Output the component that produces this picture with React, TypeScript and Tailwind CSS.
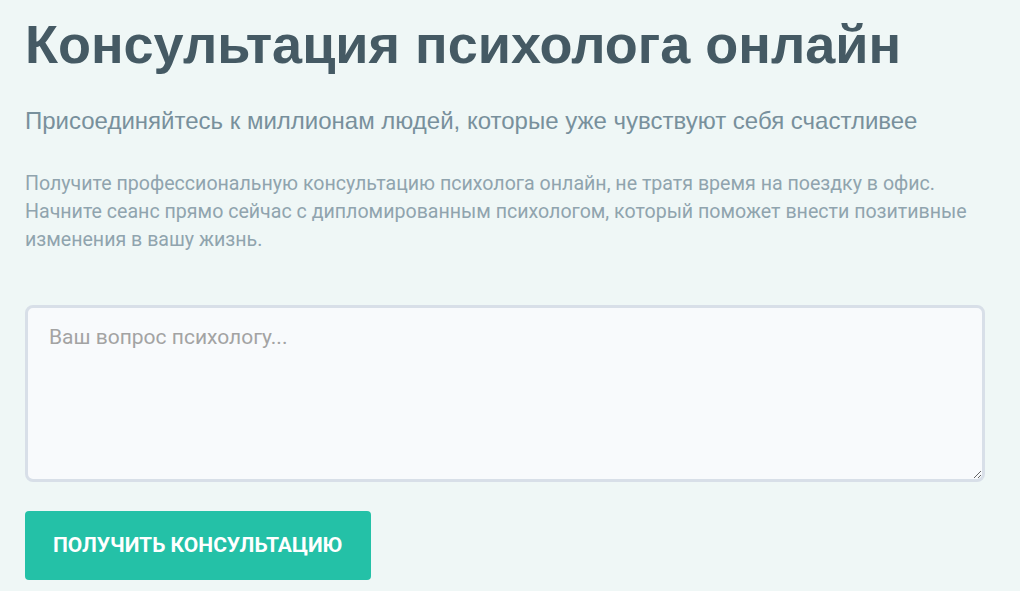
export default function App() {
  return (
    <div className="min-h-screen bg-[#eff7f6] pl-[25px] pr-[35px] pt-[10px]">
      <h1 className="font-['Liberation_Sans',Arial,sans-serif] text-[54px] font-bold leading-[68px] text-[#455a64]">
        Консультация психолога онлайн
      </h1>
      <p className="mt-[28px] font-['Liberation_Sans',Arial,sans-serif] text-[24px] leading-[30px] text-[#78909c]">
        Присоединяйтесь к миллионам людей, которые уже чувствуют себя счастливее
      </p>
      <p className="mt-[34px] font-['Roboto',sans-serif] text-[19.6px] leading-[28px] text-[#90a4ae]">
        Получите профессиональную консультацию психолога онлайн, не тратя время на поездку в офис.
        <br />
        Начните сеанс прямо сейчас с дипломированным психологом, который поможет внести позитивные
        изменения в вашу жизнь.
      </p>
      <textarea
        placeholder="Ваш вопрос психологу..."
        className="mt-[51px] block h-[177px] w-full resize-y rounded-[8px] border-[3px] border-[#d8dfe8] bg-[#f8fafc] px-[21px] py-[14px] font-['Roboto',sans-serif] text-[21px] leading-[30px] text-[#455a64] placeholder:text-[#a3a3a3] outline-none"
      />
      <button className="mt-[29px] h-[69px] rounded-[4px] bg-[#24c1a7] px-[28px] font-['Roboto',sans-serif] text-[21px] font-bold uppercase text-white">
        Получить консультацию
      </button>
    </div>
  );
}
